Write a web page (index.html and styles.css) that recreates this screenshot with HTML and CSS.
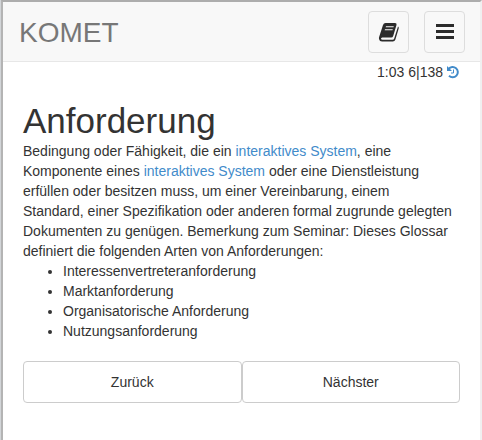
FILE: index.html
```html
<!DOCTYPE html>
<html lang="de">
<head>
<meta charset="utf-8">
<title>KOMET</title>
<link rel="stylesheet" href="styles.css">
</head>
<body>
<div class="window">
  <header class="navbar">
    <a class="brand" href="#">KOMET</a>
    <div class="tools">
      <button class="tool" type="button" aria-label="Glossar">
        <svg class="tool-icon" viewBox="0 0 22 22" aria-hidden="true"><path d="M7.500 2H17q2 0 1.500 2l-3.300 11q-.5 1.500-2 1.500H4.300q-1.500.2-1.300 1.200.2 1 1.600 1h10q1.200 0 1.600-1.200L20 5.500q1 .6.700 2L17.400 18.500q-.7 2-2.600 2H4q-2.500 0-3-2.500-.2-1.200.2-2.300L5 4q.7-2 2.500-2zM8 5.200l-.3 1.100h7.800l.3-1.100zM7 8.200l-.3 1.100h7.800l.3-1.100z"/></svg>
      </button>
      <button class="tool" type="button" aria-label="Menü">
        <svg class="tool-icon" viewBox="0 0 22 22" aria-hidden="true"><path d="M2 3h18v3H2zM2 9h18v3H2zM2 15h18v3H2z"/></svg>
      </button>
    </div>
  </header>
  <main class="content">
    <div class="status">
      <span>1:03 6|138</span>
      <a class="history" href="#" aria-label="Verlauf"><svg class="history-icon" viewBox="0 0 14 14" aria-hidden="true"><path class="history-ring" d="M2.600 3.800A5.200 5.200 0 1 1 3 10.800"/><path class="history-hand" d="M7.500 4.500v3.500H5"/><path class="history-arrow" d="M1 1v5h5z"/></svg></a>
    </div>
    <h1 class="term">Anforderung</h1>
    <p class="definition">Bedingung oder Fähigkeit, die ein <a href="#">interaktives System</a>, eine Komponente eines <a href="#">interaktives System</a> oder eine Dienstleistung erfüllen oder besitzen muss, um einer Vereinbarung, einem Standard, einer Spezifikation oder anderen formal zugrunde gelegten Dokumenten zu genügen. Bemerkung zum Seminar: Dieses Glossar definiert die folgenden Arten von Anforderungen:</p>
    <ul class="kinds">
      <li>Interessenvertreteranforderung</li>
      <li>Marktanforderung</li>
      <li>Organisatorische Anforderung</li>
      <li>Nutzungsanforderung</li>
    </ul>
    <nav class="pager">
      <button class="page-button" type="button">Zurück</button>
      <button class="page-button" type="button">Nächster</button>
    </nav>
  </main>
</div>
</body>
</html>
```
FILE: styles.css
```css
* {
  box-sizing: border-box;
}

body {
  margin: 0;
  border-left: 1px solid #d2d5d8;
  background: #fff;
  color: #333;
  font: 14px/20px "Liberation Sans", Arial, sans-serif;
}

a {
  color: #428bca;
  text-decoration: none;
}

button {
  font: inherit;
  color: inherit;
  cursor: pointer;
}

.window {
  min-height: 100vh;
  border-top: 2px solid #adadad;
  border-right: 2px solid #f0f0f0;
  border-left: 2px solid #b4b4b4;
}

.navbar {
  display: flex;
  align-items: center;
  justify-content: space-between;
  height: 60px;
  padding: 0 15px 0 16px;
  background: #f8f8f8;
  border-bottom: 1px solid #e7e7e7;
}

.navbar .brand {
  padding-top: 2px;
  color: #777;
  font-size: 28px;
  line-height: 32px;
}

.tools {
  display: flex;
  gap: 15px;
}

.tool {
  display: flex;
  align-items: center;
  justify-content: center;
  width: 41px;
  height: 42px;
  padding: 0;
  background: transparent;
  border: 1px solid #ddd;
  border-radius: 4px;
}

.tool-icon {
  width: 22px;
  height: 22px;
  fill: #2b2b2b;
  fill-rule: evenodd;
}

.content {
  padding: 0 20px;
}

.status {
  display: flex;
  align-items: center;
  justify-content: flex-end;
  gap: 3px;
}

.history {
  display: flex;
}

.history-icon {
  width: 14px;
  height: 14px;
}

.history-ring {
  fill: none;
  stroke: currentColor;
  stroke-width: 2;
}

.history-hand {
  fill: none;
  stroke: currentColor;
  stroke-width: 1;
}

.history-arrow {
  fill: currentColor;
}

.term {
  margin: 19px 0 0;
  font-size: 35px;
  font-weight: 400;
  line-height: 40px;
}

.definition {
  margin: 0;
  padding-right: 8px;
}

.kinds {
  margin: 0 0 20px;
  padding-left: 40px;
}

.pager {
  display: flex;
}

.page-button {
  flex: 1;
  height: 42px;
  padding: 0;
  background: #fff;
  border: 1px solid #ccc;
  border-radius: 4px;
}
```
